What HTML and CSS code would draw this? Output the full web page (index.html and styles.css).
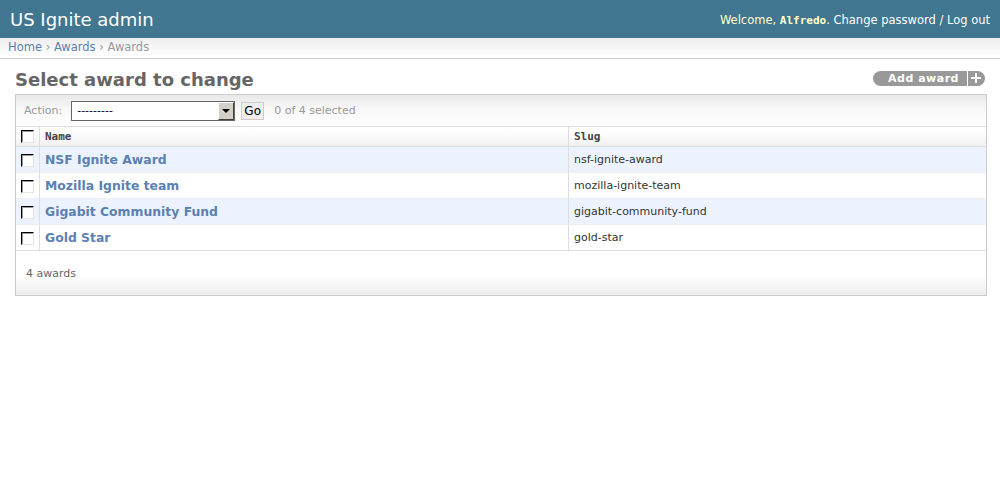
FILE: index.html
```html
<!DOCTYPE html>
<html>
<head>
<meta charset="utf-8">
<title>Select award to change | US Ignite admin</title>
<link rel="stylesheet" href="styles.css">
</head>
<body>
<div class="header">
  <div class="branding">US Ignite admin</div>
  <div class="user-tools">Welcome, <strong>Alfredo</strong>. <a href="#">Change password</a> / <a href="#">Log out</a></div>
</div>
<div class="breadcrumbs"><a href="#">Home</a> <span class="sep">›</span> <a href="#">Awards</a> <span class="sep">›</span> Awards</div>
<div class="content">
  <div class="title-row">
    <h1>Select award to change</h1>
    <a href="#" class="addlink"><span class="addlabel">Add award</span><span class="addplus"><span class="plus-h"></span><span class="plus-v"></span></span></a>
  </div>
  <div class="changelist">
    <div class="actions">
      <span class="action-label">Action:</span>
      <div class="select"><span class="select-text">---------</span><span class="select-btn"><span class="arrow"></span></span></div>
      <span class="go">Go</span>
      <span class="counter">0 of 4 selected</span>
    </div>
    <table class="results">
      <thead>
        <tr>
          <th class="col-check"><span class="cb"></span></th>
          <th class="col-name">Name</th>
          <th class="col-slug">Slug</th>
        </tr>
      </thead>
      <tbody>
        <tr class="row1"><td class="col-check"><span class="cb"></span></td><th class="col-name"><a href="#">NSF Ignite Award</a></th><td class="col-slug">nsf-ignite-award</td></tr>
        <tr class="row2"><td class="col-check"><span class="cb"></span></td><th class="col-name"><a href="#">Mozilla Ignite team</a></th><td class="col-slug">mozilla-ignite-team</td></tr>
        <tr class="row1"><td class="col-check"><span class="cb"></span></td><th class="col-name"><a href="#">Gigabit Community Fund</a></th><td class="col-slug">gigabit-community-fund</td></tr>
        <tr class="row2 last"><td class="col-check"><span class="cb"></span></td><th class="col-name"><a href="#">Gold Star</a></th><td class="col-slug">gold-star</td></tr>
      </tbody>
    </table>
    <div class="paginator">4 awards</div>
  </div>
</div>
</body>
</html>
```

FILE: styles.css
```css
body {
  margin: 0;
  font-family: "DejaVu Sans", Verdana, sans-serif;
  font-size: 12px;
  color: #333;
  background: #fff;
}
a {
  color: #5b80b2;
  text-decoration: none;
}

.header {
  height: 38px;
  background: #417690;
  color: #ffc;
  display: flex;
  justify-content: space-between;
  align-items: center;
}
.branding {
  padding: 0 10px;
  font-size: 18px;
  color: #fff;
}
.user-tools {
  padding: 2px 10px 0 10px;
  font-size: 11.5px;
  color: #ffc;
}
.user-tools a {
  color: #fff;
}
.user-tools strong {
  font-family: "DejaVu Sans Mono", monospace;
  font-size: 11px;
  font-weight: bold;
}

.breadcrumbs {
  padding: 3px 8px 4px 8px;
  line-height: 13px;
  font-size: 11.5px;
  color: #999;
  border-bottom: 1px solid #ccc;
  background: linear-gradient(to bottom, #ededed 0%, #fafafa 60%, #fff 100%);
}
.breadcrumbs .sep {
  color: #999;
}

.content {
  margin: 10px 13px 0 15px;
}
.title-row {
  display: flex;
  justify-content: space-between;
  align-items: flex-start;
  margin-bottom: 4px;
}
h1 {
  margin: 0;
  font-size: 18px;
  line-height: 21px;
  color: #666;
  font-weight: bold;
}
.addlink {
  display: flex;
  height: 15px;
  margin-top: 2px;
  margin-right: 2px;
  color: #fff;
  font-size: 11px;
  font-weight: bold;
  letter-spacing: 0.5px;
}
.addlabel {
  display: flex;
  align-items: center;
  background: #999;
  padding: 0 8px 0 15px;
  border-radius: 8px 0 0 8px;
  line-height: 15px;
}
.addplus {
  position: relative;
  width: 17px;
  background: #999;
  border-left: 1px solid #fff;
  border-radius: 0 8px 8px 0;
}
.plus-h {
  position: absolute;
  left: 3px;
  top: 6px;
  width: 10px;
  height: 2px;
  background: #fff;
}
.plus-v {
  position: absolute;
  left: 7px;
  top: 2px;
  width: 2px;
  height: 10px;
  background: #fff;
}

.changelist {
  border: 1px solid #ccc;
}
.actions {
  height: 32px;
  box-sizing: border-box;
  border-bottom: 1px solid #ddd;
  display: flex;
  align-items: center;
  padding: 0 8px;
  font-size: 11px;
  color: #999;
  background: linear-gradient(to bottom, #e8e8e8 0%, #f8f8f8 45%, #fff 100%);
}
.action-label {
  margin-right: 9px;
}
.select {
  position: relative;
  width: 164px;
  height: 20px;
  box-sizing: border-box;
  border: 1px solid #666;
  background: #fff;
  display: flex;
  align-items: center;
}
.select-text {
  padding-left: 5px;
  color: #000;
  font-size: 11px;
}
.select-btn {
  position: absolute;
  right: 0;
  top: 0;
  width: 16px;
  height: 18px;
  box-sizing: border-box;
  background: #d4d0c8;
  border: 1px solid;
  border-color: #fff #404040 #404040 #fff;
  display: flex;
  align-items: center;
  justify-content: center;
}
.arrow {
  width: 0;
  height: 0;
  border-left: 4px solid transparent;
  border-right: 4px solid transparent;
  border-top: 4px solid #000;
  margin-top: 1px;
}
.go {
  margin-left: 6px;
  width: 23px;
  height: 18px;
  box-sizing: border-box;
  border: 1px solid #ccc;
  background: #eee;
  color: #000;
  font-size: 12px;
  display: flex;
  align-items: center;
  justify-content: center;
}
.counter {
  margin-left: 10px;
}

.results {
  width: 100%;
  border-collapse: separate;
  border-spacing: 0;
  table-layout: fixed;
}
.results th,
.results td {
  box-sizing: border-box;
  padding: 0 5px;
  text-align: left;
  vertical-align: middle;
}
.results thead th {
  height: 20px;
  border-bottom: 1px solid #ddd;
  font-family: "DejaVu Sans Mono", monospace;
  font-size: 11px;
  font-weight: bold;
  color: #444;
  background: linear-gradient(to bottom, #fff 0%, #fafafa 50%, #f0f0f0 100%);
}
.results .col-check {
  width: 24px;
  padding: 0;
  text-align: center;
  border-right: 1px solid #ddd;
}
.results .col-name {
  width: 529px;
  border-right: 1px solid #ddd;
}
.results tbody td,
.results tbody th {
  height: 26px;
  border-bottom: 1px solid #eee;
}
.results tbody th a {
  font-size: 12.4px;
  font-weight: bold;
}
.results tbody .col-slug {
  font-size: 11px;
  color: #333;
}
.results tbody tr.row1 td,
.results tbody tr.row1 th {
  background: #edf3fe;
}
.results tbody tr.row2 td,
.results tbody tr.row2 th {
  background: #fff;
}
.results tbody tr.last td,
.results tbody tr.last th {
  border-bottom-color: #ddd;
}
.cb {
  display: inline-block;
  vertical-align: middle;
  width: 13px;
  height: 13px;
  box-sizing: border-box;
  border: 1px solid;
  border-color: #000 #e4e4e4 #e4e4e4 #000;
  box-shadow: inset 1px 1px 0 #999;
  background: #fff;
}

.paginator {
  height: 44px;
  display: flex;
  align-items: center;
  padding-left: 10px;
  font-size: 11px;
  color: #666;
  background: linear-gradient(to bottom, #fff 0%, #fff 55%, #ececec 100%);
}
```
